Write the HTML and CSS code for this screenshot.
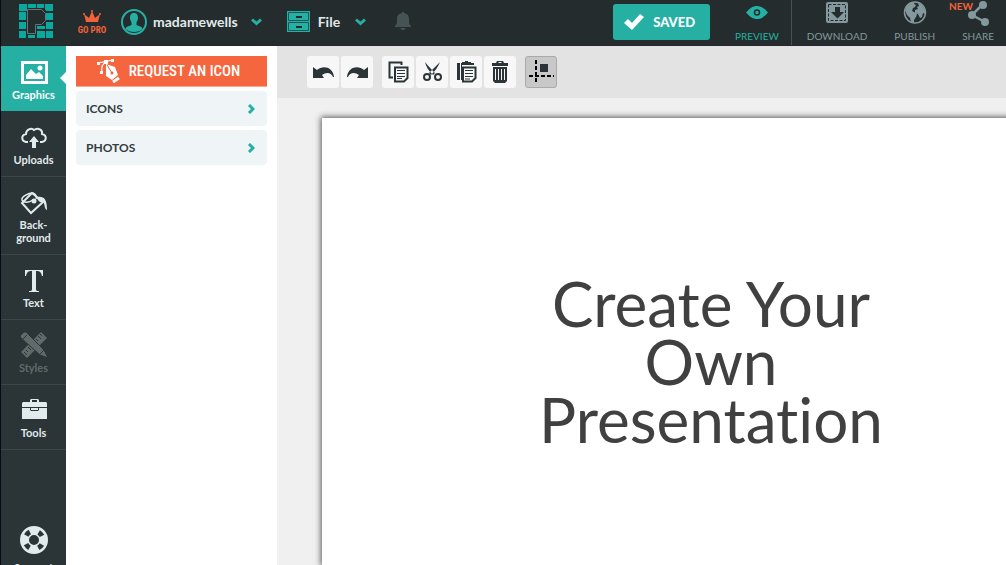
FILE: index.html
```html
<!DOCTYPE html>
<html lang="en">
<head>
  <meta charset="utf-8">
  <title>Presentation editor</title>
  <link rel="stylesheet" href="styles.css">
</head>
<body>
  <header class="topbar">
    <a class="logo" href="#" aria-label="Home">
      <svg width="34" height="34" viewBox="0 0 34 34">
        <path fill="#0aa99f" d="M0 0h8v7H0zM9 0h8v4H9zM18 0h7v4h-7zM26 0h8v7h-7l-1-2zM0 8h7v8H0zM0 18h7v7H0zM0 27h7v7H0zM27 9h7v7h-7zM27 18h7v7h-7zM27 27h7v7h-7zM9 31h7v3H9zM18 27h8v7h-8zM18 22h8v3h-8z"/>
        <path fill="#242c2d" stroke="#62777a" d="M8.500 5.500h14l4 4v7l-4 4h-6v9h-8z"/>
      </svg>
    </a>
    <a class="gopro" href="#">
      <svg width="18" height="13" viewBox="0 0 18 13" fill="#f4623a">
        <path d="M3 12L1 4l5 4 3-7 3 7 5-4-2 8z"/>
        <circle cx="1" cy="4" r="1"/><circle cx="9" cy="1" r="1"/><circle cx="17" cy="4" r="1"/>
      </svg>
      <span>GO PRO</span>
    </a>
    <button class="menu user">
      <svg width="26" height="26" viewBox="0 0 26 26">
        <circle cx="13" cy="13" r="12" fill="none" stroke="#26b0a4" stroke-width="2"/>
        <path fill="#26b0a4" d="M13 4c3 0 4 2 4 5 0 2-1 3-1.500 4.500V16l5 2 1 2c-4 4-13 4-17 0l1-2 5-2v-2.500C10 12 9 11 9 9c0-3 1-5 4-5z"/>
      </svg>
      <span>madamewells</span>
      <svg class="arrow" width="11" height="8" viewBox="0 0 11 8"><path d="M1 1.500l4.500 4 4.500-4"/></svg>
    </button>
    <button class="menu file">
      <svg width="23" height="21" viewBox="0 0 23 21">
        <path fill="#26b0a4" d="M0 0h23v21H0z"/>
        <path fill="none" stroke="#1b5855" d="M1.500 1.500h20v8h-20zM1.500 11.500h20v8h-20z"/>
        <path fill="#242c2d" d="M9 5h6v2H9zM9 15h6v2H9z"/>
      </svg>
      <span>File</span>
      <svg class="arrow" width="11" height="8" viewBox="0 0 11 8"><path d="M1 1.500l4.500 4 4.500-4"/></svg>
    </button>
    <button class="bell" aria-label="Notifications">
      <svg width="18" height="19" viewBox="0 0 18 19" fill="#455355">
        <path d="M8 2V1h2v1c4 1 5 3 5 6 0 4 0 5 2 7v1H1v-1c2-2 2-3 2-7 0-3 1-5 5-6zM6 17h6l-2 2H8z"/>
      </svg>
    </button>

    <button class="saved">
      <svg width="20" height="16" viewBox="0 0 20 16"><path fill="#fff" d="M0 9l4-4 4 4 8-9 4 3L8 16z"/></svg>
      <span>SAVED</span>
    </button>
    <button class="action preview">
      <svg width="24" height="24" viewBox="0 0 24 24">
        <path fill="#26b0a4" d="M1 12.500C5 8 8 6 12 6s7 2 11 6.500C19 17 16 19 12 19s-7-2-11-6.500z"/>
        <circle cx="12" cy="12.500" r="2.500" fill="none" stroke="#242c2d" stroke-width="1.500"/>
      </svg>
      <span>PREVIEW</span>
    </button>
    <div class="actions">
      <button class="action">
        <svg width="24" height="24" viewBox="0 0 24 24">
          <rect x="1" y="2" width="22" height="21" rx="2" fill="#83999d"/>
          <rect x="3.500" y="4.500" width="17" height="16" fill="none" stroke="#242c2d" stroke-dasharray="3 1.500"/>
          <path fill="#242c2d" d="M10 7h5v5h4l-6.500 6.500L6 12h4z"/>
        </svg>
        <span>DOWNLOAD</span>
      </button>
      <button class="action">
        <svg width="24" height="24" viewBox="0 0 24 24">
          <circle cx="12" cy="12.500" r="10.500" fill="#242c2d" stroke="#83999d" stroke-width="1.500"/>
          <path fill="#83999d" d="M3 7l5-4 4-1-1 2 2 1-1 2-2 1-1 3 2 1 3 2-1 3-2 3v3l-3-1-1-4-3-3-2-5zM15 3l4 2 3 5v4l-2-1-1 4-2 1-2-4-3-1v-3l3-1-1-2 2-1z"/>
        </svg>
        <span>PUBLISH</span>
      </button>
      <button class="action share">
        <svg width="24" height="26" viewBox="0 0 24 26" fill="#83999d">
          <path fill="none" stroke="#83999d" stroke-width="2.500" d="M16 5L6 15l13 7"/>
          <circle cx="17" cy="5" r="4"/><circle cx="6" cy="15" r="4"/><circle cx="19" cy="22" r="4"/>
        </svg>
        <span>SHARE</span>
        <span class="badge">NEW</span>
      </button>
    </div>
  </header>

  <div class="editor">
    <nav class="sidebar">
      <button class="tab active">
        <svg width="28" height="24" viewBox="0 0 28 24">
          <path fill="#fff" fill-rule="evenodd" d="M1 0h27v23H1zM4 3v17h21V3z"/>
          <path fill="#fff" d="M6 18v-4l5-6 5 5 3-2 4 4v3z"/><circle cx="20" cy="7" r="2.500" fill="#fff"/>
        </svg>
        <span>Graphics</span>
      </button>
      <button class="tab">
        <svg width="28" height="24" viewBox="0 0 28 24">
          <path fill="none" stroke="#e1eaec" stroke-width="2" d="M8 16H6c-5-1-5-7 0-8 0-4 5-7 8-4 4-3 9 0 8 4 5 1 5 7 0 8h-2"/>
          <path fill="#e1eaec" d="M14 10l5 6h-3v6h-4v-6H9z"/>
        </svg>
        <span>Uploads</span>
      </button>
      <button class="tab">
        <svg width="28" height="24" viewBox="0 0 28 24">
          <path fill="none" stroke="#e1eaec" stroke-width="2" d="M12 2L2 12l9 10 12-11z"/>
          <path fill="none" stroke="#e1eaec" stroke-width="1.500" d="M13 9c-4 3-10 3-11 0s6-7 11-7c3 1 4 4 3 6"/>
          <circle cx="14" cy="10" r="2.500" fill="#e1eaec"/>
          <path fill="#e1eaec" d="M17 6c7-1 10 2 10 13-3-1-2-7-4-8-2 1-6-1-6-5z"/>
        </svg>
        <span>Back-<br>ground</span>
      </button>
      <button class="tab">
        <svg width="28" height="24" viewBox="0 0 28 24" fill="#e1eaec">
          <path d="M5 1h18v6h-1c-1-4-2-5-6-5v18c0 2 1 2 3 2v1H9v-1c2 0 3 0 3-2V2C8 2 7 3 6 7H5z"/>
        </svg>
        <span>Text</span>
      </button>
      <button class="tab" disabled>
        <svg width="28" height="26" viewBox="0 0 28 26">
          <path fill="#606a6b" d="M21 0l6 6L7 26l-6-6z"/>
          <path stroke="#2b3436" stroke-width="1" d="M18 4l3 3M20 2l2 2M16 7l2 2M8 15l3 3M6 18l2 2M4 20l3 3"/>
          <path fill="#606a6b" stroke="#2b3436" d="M0 4l4-4h2l18 18 4 8-8-3L1 6z"/>
          <path stroke="#2b3436" d="M3 7l4-4M20 22l4-4"/>
        </svg>
        <span>Styles</span>
      </button>
      <button class="tab">
        <svg width="28" height="24" viewBox="0 0 28 24" fill="#e1eaec">
          <path fill-rule="evenodd" d="M10 3V1l1-1h7l1 1v2h7l1 1v4H2V4l1-1zM12 3h5V1h-5zM2 9h25v11H2zM10 9v2l1 1h7l1-1V9h-1v2h-7V9z"/>
        </svg>
        <span>Tools</span>
      </button>
      <button class="tab support">
        <svg width="28" height="28" viewBox="0 0 28 28">
          <circle cx="14" cy="14" r="9.500" fill="none" stroke="#e1eaec" stroke-width="9"/>
          <circle cx="14" cy="14" r="9" fill="none" stroke="#2b3436" stroke-width="5" stroke-dasharray="5 9.137" stroke-dashoffset="-4.600"/>
        </svg>
        <span>Support</span>
      </button>
    </nav>

    <aside class="panel">
      <a class="request" href="#">
        <svg width="24" height="24" viewBox="0 0 24 24">
          <path fill="none" stroke="#fff" stroke-width="1.200" d="M1 4l15-3M9 3C5 5 4 8 5 13"/>
          <path fill="#fff" d="M0 3h3v3H0zM7 1h4v4H7zM14 0h3v3h-3zM3 12h3v3H3zM9 5l9 3 3 8-6 5-6-4z"/>
          <path stroke="#f4623a" d="M10 6l5 8"/><circle cx="15" cy="14" r="1.500" fill="#f4623a"/>
          <path stroke="#fff" stroke-width="3" d="M16 23l6-4"/>
        </svg>
        <span>REQUEST AN ICON</span>
      </a>
      <button class="category">
        <span>ICONS</span>
        <svg class="arrow" width="8" height="10" viewBox="0 0 8 10"><path d="M2 1l4 4-4 4"/></svg>
      </button>
      <button class="category">
        <span>PHOTOS</span>
        <svg class="arrow" width="8" height="10" viewBox="0 0 8 10"><path d="M2 1l4 4-4 4"/></svg>
      </button>
    </aside>

    <main class="workspace">
      <div class="toolbar">
        <div class="group">
          <button class="tool" aria-label="Undo">
            <svg width="24" height="24" viewBox="0 0 24 24"><path d="M2 7l4 3c6-5 16-3 17 7h-1c-2-5-7-5-11-2l2 3H2z"/></svg>
          </button>
          <button class="tool" aria-label="Redo">
            <svg width="24" height="24" viewBox="0 0 24 24"><path d="M23 7l-4 3C13 5 3 7 2 17h1c2-5 7-5 11-2l-2 3h11z"/></svg>
          </button>
        </div>
        <div class="group">
          <button class="tool" aria-label="Copy">
            <svg width="24" height="24" viewBox="0 0 24 24">
              <path class="line" d="M7 17.500H3.500v-15h12V5M9 7.500h12.500V18L18 21.500H9z"/>
              <path class="thin" d="M11 10.500h8M11 13.500h8M11 16.500h8M11 18.500h5"/>
            </svg>
          </button>
          <button class="tool" aria-label="Cut">
            <svg width="24" height="24" viewBox="0 0 24 24">
              <path d="M5 2c1 5 4 9 8 13l2-2C12 10 9 7 5 2zM20 2c-2 5-5 9-9 13l-2-2c3-3 6-6 11-11z"/>
              <circle class="line" cx="7" cy="17" r="3"/><circle class="line" cx="18" cy="17" r="3"/>
            </svg>
          </button>
          <button class="tool" aria-label="Paste">
            <svg width="24" height="24" viewBox="0 0 24 24">
              <path d="M3 3h3v17H3zM7 3h1V2h3V1h3v1h3v1h3v2H7zM7 5h1v15H7z"/>
              <path class="line sheet" d="M9 7.500h12.500V18L18 21.500H9z"/>
              <path class="thin" d="M11 10.500h8M11 13.500h8M11 16.500h8M11 19h5"/>
            </svg>
          </button>
          <button class="tool" aria-label="Delete">
            <svg width="24" height="24" viewBox="0 0 24 24">
              <path fill-rule="evenodd" d="M8 3l1-2h6l1 2h4v3H4V3zM10 3h4l-1-1h-2zM5 7h14v14l-2 2H7l-2-2zM7 9v11h1V9zM10 9v11h1V9zM13 9v11h1V9zM16 9v11h1V9z"/>
            </svg>
          </button>
        </div>
        <div class="group">
          <button class="tool pressed" aria-label="Snap to grid">
            <svg width="26" height="26" viewBox="0 0 26 26">
              <path d="M12 5h8v8h-8z"/>
              <path class="dash" d="M8 1v24M1 17h25"/>
            </svg>
          </button>
        </div>
      </div>
      <div class="stage">
        <section class="slide">
          <h1>Create Your Own Presentation</h1>
        </section>
      </div>
    </main>
  </div>
</body>
</html>
```
FILE: styles.css
```css
* {
  box-sizing: border-box;
}

body {
  display: flex;
  flex-direction: column;
  height: 100vh;
  margin: 0;
  padding-left: 1px;
  overflow: hidden;
  background: #070c18;
  font-family: Lato, sans-serif;
}

button {
  margin: 0;
  padding: 0;
  border: 0;
  background: none;
  color: inherit;
  font-family: inherit;
  cursor: pointer;
}

a {
  text-decoration: none;
}

svg {
  display: block;
  flex: none;
}

.arrow {
  fill: none;
  stroke: #26b0a4;
  stroke-width: 3;
}

/* Top bar */
.topbar {
  display: flex;
  flex: none;
  align-items: flex-start;
  height: 46px;
  padding: 0 12px 0 18px;
  background: #242c2d;
  border-bottom: 1px solid #2a2430;
  color: #e1eaec;
}

.logo {
  padding-top: 4px;
}

.gopro {
  display: flex;
  flex-direction: column;
  align-items: center;
  margin-left: 23px;
  padding-top: 10px;
  width: 32px;
  color: #f4623a;
  font: bold 9px/14px "Roboto Condensed", Roboto, sans-serif;
  white-space: nowrap;
}

.menu {
  display: flex;
  align-items: center;
  height: 43px;
  font-size: 14px;
  font-weight: bold;
}

.user {
  gap: 6px;
  margin-left: 13px;
}

.file {
  gap: 8px;
  margin-left: 25px;
}

.menu .arrow {
  margin-left: 7px;
}

.bell {
  margin-left: 28px;
  padding-top: 11px;
}

.saved {
  display: flex;
  align-items: center;
  gap: 9px;
  height: 36px;
  margin: 4px 25px 0 auto;
  padding: 0 15px 0 11px;
  background: #26b0a4;
  border-radius: 3px;
  color: #fff;
  font-size: 13px;
  font-weight: 900;
}

.actions {
  display: flex;
  gap: 27px;
  padding-left: 15px;
}

.action {
  position: relative;
  display: flex;
  flex-direction: column;
  align-items: center;
  justify-content: space-between;
  height: 45px;
  padding-bottom: 3px;
  color: #83999d;
  font-size: 10px;
  line-height: 12px;
}

.preview {
  padding-right: 12px;
  border-right: 1px solid #455355;
  color: #26b0a4;
}

.badge {
  position: absolute;
  top: 0;
  right: 21px;
  color: #f4623a;
  font-weight: bold;
}

.editor {
  display: flex;
  flex: 1;
  min-height: 0;
}

/* Left tabs */
.sidebar {
  display: flex;
  flex: none;
  flex-direction: column;
  width: 65px;
  overflow: hidden;
  background: #2b3436;
}

.tab {
  position: relative;
  display: flex;
  flex: none;
  flex-direction: column;
  align-items: center;
  gap: 3px;
  padding: 14px 0 10px;
  border-bottom: 1px solid #3b4849;
  color: #e1eaec;
  font-size: 11px;
  font-weight: bold;
  line-height: 13px;
}

.tab:disabled {
  padding-top: 12px;
  color: #606a6b;
}

.tab.active {
  padding-top: 15px;
  background: #26b0a4;
  border-color: #2b3436;
  color: #fff;
}

.tab.active::after {
  content: "";
  position: absolute;
  top: 26px;
  right: 0;
  border: 6px solid transparent;
  border-left: 0;
  border-right-color: #fff;
}

.support {
  margin-top: 62px;
  gap: 7px;
  border: 0;
}

/* Library panel */
.panel {
  display: flex;
  flex: none;
  flex-direction: column;
  gap: 4px;
  width: 211px;
  padding: 10px;
  background: #fff;
}

.request {
  display: flex;
  align-items: center;
  justify-content: center;
  gap: 8px;
  height: 31px;
  padding-right: 6px;
  background: #f5663e;
  border-bottom: 1px solid #f9a78d;
  color: #fff;
  font: 500 15px/20px "Roboto Condensed", Roboto, sans-serif;
  white-space: nowrap;
}

.category {
  display: flex;
  align-items: center;
  justify-content: space-between;
  height: 35px;
  padding: 0 12px 0 10px;
  background: #eff4f7;
  border-radius: 4px;
  color: #333d40;
  font-size: 12px;
  font-weight: bold;
}

/* Work area */
.workspace {
  display: flex;
  flex: 1;
  flex-direction: column;
  min-width: 0;
  overflow: hidden;
  background: #f0f0f0;
}

.toolbar {
  display: flex;
  flex: none;
  gap: 9px;
  padding: 10px 30px;
  background: #e3e3e3;
}

.group {
  display: flex;
  gap: 2px;
}

.tool {
  display: flex;
  align-items: center;
  justify-content: center;
  width: 32px;
  height: 32px;
  background: #f7f7f7;
  border-radius: 3px;
  fill: #2b3436;
}

.tool.pressed {
  background: #c8c8c8;
  border: 1px solid #aaa;
}

.line {
  fill: none;
  stroke: #2b3436;
  stroke-width: 2;
}

.sheet {
  fill: #f7f7f7;
}

.thin {
  stroke: #2b3436;
}

.dash {
  stroke: #000;
  stroke-width: 2;
  stroke-dasharray: 4 2;
}

.stage {
  flex: 1;
  padding: 20px 0 0 45px;
}

.slide {
  width: 778px;
  height: 100%;
  padding-top: 156px;
  background: #fff;
  box-shadow: 0 0 6px 1px #555;
}

.slide h1 {
  width: 360px;
  margin: 0 auto;
  color: #404040;
  font-size: 62px;
  font-weight: normal;
  font-variant-ligatures: none;
  line-height: 58px;
  text-align: center;
}
```
